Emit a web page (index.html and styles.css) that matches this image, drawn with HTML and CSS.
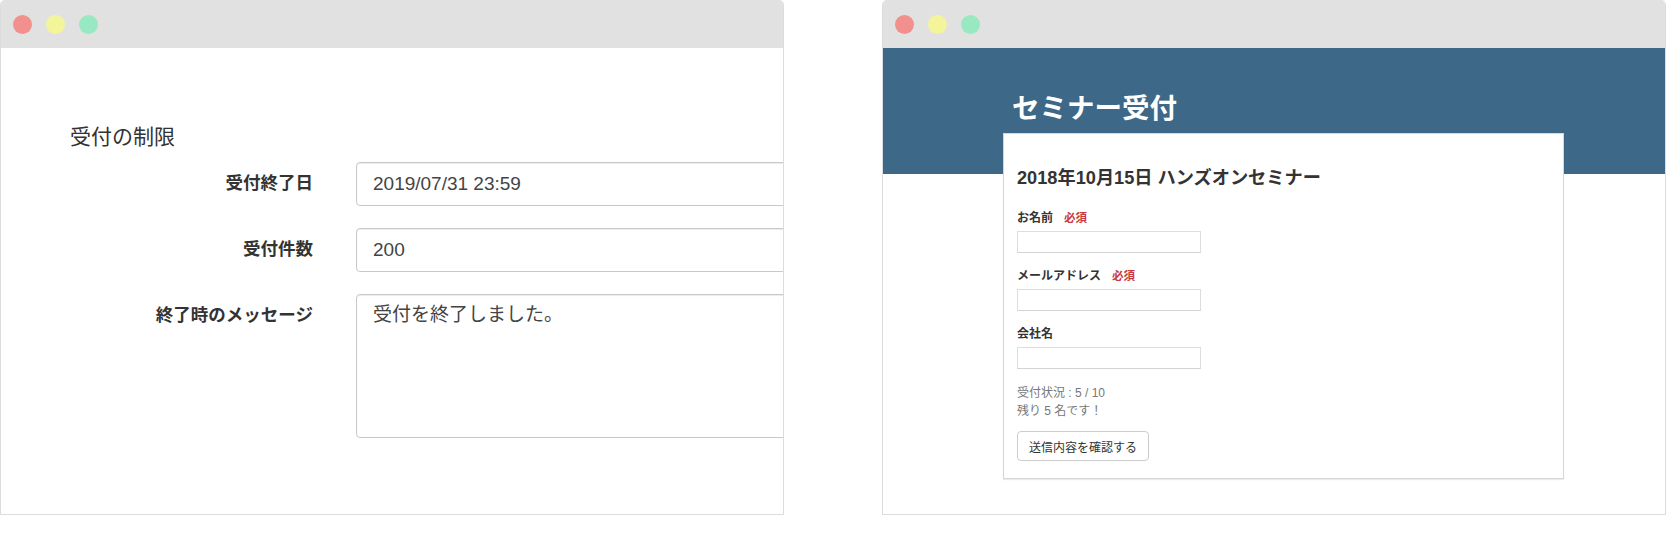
FILE: index.html
```html
<!DOCTYPE html>
<html lang="ja">

<head>
  <meta charset="UTF-8">
  <meta name="viewport" content="width=device-width, initial-scale=1.0">
  <title>受付の制限 / セミナー受付</title>
  <link rel="stylesheet" href="styles.css">
</head>

<body>
  <div class="screens">
    <div class="window">
      <div class="titlebar">
        <span class="dot dot-red"></span>
        <span class="dot dot-yellow"></span>
        <span class="dot dot-green"></span>
      </div>
      <div class="window-body admin">
        <h2 class="admin-title">受付の制限</h2>
        <div class="admin-form">
          <label class="admin-label" for="end-date">受付終了日</label>
          <input class="admin-input" type="text" id="end-date" value="2019/07/31 23:59">

          <label class="admin-label" for="limit">受付件数</label>
          <input class="admin-input" type="text" id="limit" value="200">

          <label class="admin-label" for="message">終了時のメッセージ</label>
          <textarea class="admin-input admin-textarea" id="message">受付を終了しました。</textarea>
        </div>
      </div>
    </div>

    <div class="window">
      <div class="titlebar">
        <span class="dot dot-red"></span>
        <span class="dot dot-yellow"></span>
        <span class="dot dot-green"></span>
      </div>
      <div class="window-body seminar">
        <div class="seminar-header">
          <h1>セミナー受付</h1>
        </div>
        <div class="card">
          <h3 class="card-title">2018年10月15日 ハンズオンセミナー</h3>

          <div class="field">
            <label for="name">お名前<span class="required">必須</span></label>
            <input type="text" id="name">
          </div>
          <div class="field">
            <label for="email">メールアドレス<span class="required">必須</span></label>
            <input type="text" id="email">
          </div>
          <div class="field">
            <label for="company">会社名</label>
            <input type="text" id="company">
          </div>

          <p class="status">受付状況 : 5 / 10<br>残り 5 名です！</p>

          <button class="btn">送信内容を確認する</button>
        </div>
      </div>
    </div>
  </div>
</body>

</html>
```

FILE: styles.css
```css
body {
  margin: 0;
  background: #fff;
  color: #333;
  font-family: "Liberation Sans", "Noto Sans CJK JP", sans-serif;
}

.screens {
  display: flex;
  gap: 98px;
  width: 1666px;
}

.window {
  width: 784px;
  height: 515px;
  box-sizing: border-box;
  border: 1px solid #dcdcdc;
  border-top: none;
  border-radius: 5px 5px 0 0;
  display: flex;
  flex-direction: column;
  overflow: hidden;
}

.titlebar {
  height: 48px;
  flex: none;
  background: #e1e1e1;
  display: flex;
  align-items: center;
  gap: 14px;
  padding-left: 12px;
}

.dot {
  width: 19px;
  height: 19px;
  border-radius: 50%;
}

.dot-red {
  background: #f2908d;
}

.dot-yellow {
  background: #f4f49b;
}

.dot-green {
  background: #98e9c1;
}

.window-body {
  flex: 1;
  background: #fff;
  overflow: hidden;
}

/* 左: 管理画面 */
.admin {
  padding-top: 74px;
}

.admin-title {
  margin: 0 0 11px 69px;
  font-size: 21px;
  font-weight: normal;
  line-height: 1.4;
}

.admin-form {
  display: grid;
  grid-template-columns: 312px 600px;
  column-gap: 43px;
  row-gap: 22px;
}

.admin-label {
  text-align: right;
  font-size: 17.5px;
  font-weight: bold;
  line-height: 1.4;
  padding-top: 9px;
}

.admin-input {
  height: 44px;
  box-sizing: border-box;
  border: 1px solid #c8c8c8;
  border-radius: 4px;
  box-shadow: inset 0 1px 1px rgba(0, 0, 0, 0.08);
  padding: 0 16px;
  font-family: inherit;
  font-size: 19px;
  color: #444;
  background: #fff;
}

.admin-textarea {
  height: 144px;
  padding: 7px 16px;
  line-height: 1.4;
  resize: none;
}

/* 右: セミナー受付 */
.seminar-header {
  height: 126px;
  box-sizing: border-box;
  background: #3e6887;
  padding: 44px 0 0 129px;
}

.seminar-header h1 {
  margin: 0;
  color: #fff;
  font-size: 27.5px;
  line-height: 1.2;
}

.card {
  width: 561px;
  box-sizing: border-box;
  margin: -41px 0 0 120px;
  background: #fff;
  border: 1px solid #d6d6d6;
  box-shadow: 0 1px 1px rgba(0, 0, 0, 0.08);
  padding: 34px 14px 17px 13px;
}

.card-title {
  margin: 0 0 19px;
  font-size: 18.2px;
  line-height: 1.2;
}

.field {
  margin-bottom: 14px;
}

.field label {
  display: block;
  font-size: 12px;
  font-weight: bold;
  line-height: 1.5;
  margin-bottom: 4px;
}

.required {
  color: #c8393b;
  font-size: 11.5px;
  margin-left: 11px;
}

.field input {
  display: block;
  width: 184px;
  height: 22px;
  box-sizing: border-box;
  border: 1px solid #ddd;
  border-bottom-color: #d3d3d3;
  padding: 0 4px;
  font-size: 12px;
}

.status {
  margin: 15px 0 11px;
  font-size: 12px;
  line-height: 1.5;
  color: #777;
}

.btn {
  height: 30px;
  padding: 0 11px;
  border: 1px solid #ccc;
  border-radius: 4px;
  background: #fff;
  color: #333;
  font-family: inherit;
  font-size: 12px;
}
```
